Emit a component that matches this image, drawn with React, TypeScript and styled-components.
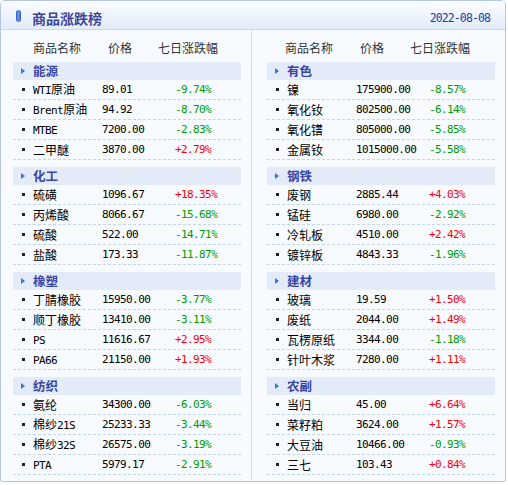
import React from "react";
import styled, { createGlobalStyle } from "styled-components";

const Global = createGlobalStyle`
  html, body { margin: 0; padding: 0; background: #ffffff; }
  body { font-family: "Noto Sans CJK SC", "Liberation Sans", sans-serif; }
`;

type Item = { name: string; price: string; change: string };
type Group = { title: string; items: Item[] };

const left: Group[] = [
  { title: "能源", items: [
    { name: "WTI原油", price: "89.01", change: "-9.74%" },
    { name: "Brent原油", price: "94.92", change: "-8.70%" },
    { name: "MTBE", price: "7200.00", change: "-2.83%" },
    { name: "二甲醚", price: "3870.00", change: "+2.79%" },
  ]},
  { title: "化工", items: [
    { name: "硫磺", price: "1096.67", change: "+18.35%" },
    { name: "丙烯酸", price: "8066.67", change: "-15.68%" },
    { name: "硫酸", price: "522.00", change: "-14.71%" },
    { name: "盐酸", price: "173.33", change: "-11.87%" },
  ]},
  { title: "橡塑", items: [
    { name: "丁腈橡胶", price: "15950.00", change: "-3.77%" },
    { name: "顺丁橡胶", price: "13410.00", change: "-3.11%" },
    { name: "PS", price: "11616.67", change: "+2.95%" },
    { name: "PA66", price: "21150.00", change: "+1.93%" },
  ]},
  { title: "纺织", items: [
    { name: "氨纶", price: "34300.00", change: "-6.03%" },
    { name: "棉纱21S", price: "25233.33", change: "-3.44%" },
    { name: "棉纱32S", price: "26575.00", change: "-3.19%" },
    { name: "PTA", price: "5979.17", change: "-2.91%" },
  ]},
];

const right: Group[] = [
  { title: "有色", items: [
    { name: "镍", price: "175900.00", change: "-8.57%" },
    { name: "氧化钕", price: "802500.00", change: "-6.14%" },
    { name: "氧化镨", price: "805000.00", change: "-5.85%" },
    { name: "金属钕", price: "1015000.00", change: "-5.58%" },
  ]},
  { title: "钢铁", items: [
    { name: "废钢", price: "2885.44", change: "+4.03%" },
    { name: "锰硅", price: "6980.00", change: "-2.92%" },
    { name: "冷轧板", price: "4510.00", change: "+2.42%" },
    { name: "镀锌板", price: "4843.33", change: "-1.96%" },
  ]},
  { title: "建材", items: [
    { name: "玻璃", price: "19.59", change: "+1.50%" },
    { name: "废纸", price: "2044.00", change: "+1.49%" },
    { name: "瓦楞原纸", price: "3344.00", change: "-1.18%" },
    { name: "针叶木浆", price: "7280.00", change: "+1.11%" },
  ]},
  { title: "农副", items: [
    { name: "当归", price: "45.00", change: "+6.64%" },
    { name: "菜籽粕", price: "3624.00", change: "+1.57%" },
    { name: "大豆油", price: "10466.00", change: "-0.93%" },
    { name: "三七", price: "103.43", change: "+0.84%" },
  ]},
];

const Frame = styled.div`
  width: 504px;
  border: 1px solid #b4c6e4;
  border-radius: 5px 5px 2px 2px;
  background: #f7faff;
  overflow: hidden;
`;

const Header = styled.div`
  height: 29px;
  box-sizing: border-box;
  padding: 5px 15px 0 15px;
  border-bottom: 1px solid #cfd8e6;
  background: linear-gradient(#fbfdff, #e2ebf9);
  display: flex;
  align-items: center;
`;

const Pill = styled.span`
  width: 5px;
  height: 12px;
  border-radius: 3px;
  background: linear-gradient(90deg, #2f5fc8, #6f98e8, #2c58c0);
  margin-right: 11px;
  margin-top: -3px;
`;

const Title = styled.span`
  font-size: 14px;
  font-weight: bold;
  color: #3f4596;
  line-height: 16px;
`;

const DateText = styled.span`
  margin-left: auto;
  font-family: "DejaVu Sans Mono", monospace;
  font-size: 11.5px;
  letter-spacing: -0.9px;
  color: #1a3ea6;
  line-height: 16px;
`;

const Body = styled.div`
  display: flex;
  align-items: stretch;
`;

const Panel = styled.div<{ $inset: number; $width: number }>`
  width: ${(p) => p.$width}px;
  box-sizing: border-box;
  padding: 2px 0 6px ${(p) => p.$inset}px;
`;

const Divider = styled.div`
  width: 1px;
  background: #d9dee6;
`;

const ColHead = styled.div<{ $shift: number }>`
  width: 228px;
  height: 30px;
  display: grid;
  grid-template-columns: 75px 50px auto;
  align-items: center;
  padding-left: ${(p) => p.$shift}px;
  box-sizing: border-box;
  font-size: 12px;
  color: #333333;
`;

const GroupBox = styled.div`
  width: 228px;
  margin-bottom: 7px;
  &:last-child { margin-bottom: 0; }
`;

const Band = styled.div`
  height: 18px;
  background: #e4ebf8;
  display: flex;
  align-items: center;
  padding-left: 8px;
`;

const Arrow = styled.span`
  width: 0;
  height: 0;
  border-top: 3px solid transparent;
  border-bottom: 3px solid transparent;
  border-left: 4px solid #3a72d6;
  margin-right: 8px;
`;

const BandTitle = styled.span`
  font-size: 12.5px;
  font-weight: bold;
  color: #3a46a4;
  line-height: 1;
`;

const Row = styled.div`
  height: 19px;
  border-bottom: 1px dashed #c3d5ef;
  display: grid;
  grid-template-columns: 20px 69px 73px auto;
  align-items: center;
  font-size: 12px;
  color: #000000;
`;

const Bullet = styled.span`
  width: 3px;
  height: 3px;
  background: #222222;
  margin-left: 9px;
`;

const Name = styled.span`
  font-size: 12px;
  line-height: 1;
  white-space: nowrap;
`;

const Latin = styled.span`
  font-family: "DejaVu Sans Mono", monospace;
  font-size: 11px;
  letter-spacing: -0.6px;
`;

const Num = styled.span`
  font-family: "DejaVu Sans Mono", monospace;
  font-size: 11px;
  letter-spacing: -0.6px;
  line-height: 1;
  white-space: nowrap;
`;

const Change = styled(Num)<{ $up: boolean }>`
  color: ${(p) => (p.$up ? "#ff0000" : "#009a00")};
`;

function renderName(name: string) {
  const parts = name.match(/[\x00-\x7f]+|[^\x00-\x7f]+/g) || [];
  return parts.map((p, i) =>
    /^[\x00-\x7f]+$/.test(p) ? <Latin key={i}>{p}</Latin> : <React.Fragment key={i}>{p}</React.Fragment>
  );
}

function Column({ groups, inset, width, shift }: { groups: Group[]; inset: number; width: number; shift: number }) {
  return (
    <Panel $inset={inset} $width={width}>
      <ColHead $shift={shift}>
        <span>商品名称</span>
        <span>价格</span>
        <span>七日涨跌幅</span>
      </ColHead>
      {groups.map((g) => (
        <GroupBox key={g.title}>
          <Band>
            <Arrow />
            <BandTitle>{g.title}</BandTitle>
          </Band>
          {g.items.map((it) => (
            <Row key={it.name}>
              <Bullet />
              <Name>{renderName(it.name)}</Name>
              <Num>{it.price}</Num>
              <Change $up={it.change.startsWith("+")}>{it.change}</Change>
            </Row>
          ))}
        </GroupBox>
      ))}
    </Panel>
  );
}

export default function App() {
  return (
    <>
      <Global />
      <Frame>
        <Header>
          <Pill />
          <Title>商品涨跌榜</Title>
          <DateText>2022-08-08</DateText>
        </Header>
        <Body>
          <Column groups={left} inset={12} width={250} shift={20} />
          <Divider />
          <Column groups={right} inset={15} width={253} shift={18} />
        </Body>
      </Frame>
    </>
  );
}
